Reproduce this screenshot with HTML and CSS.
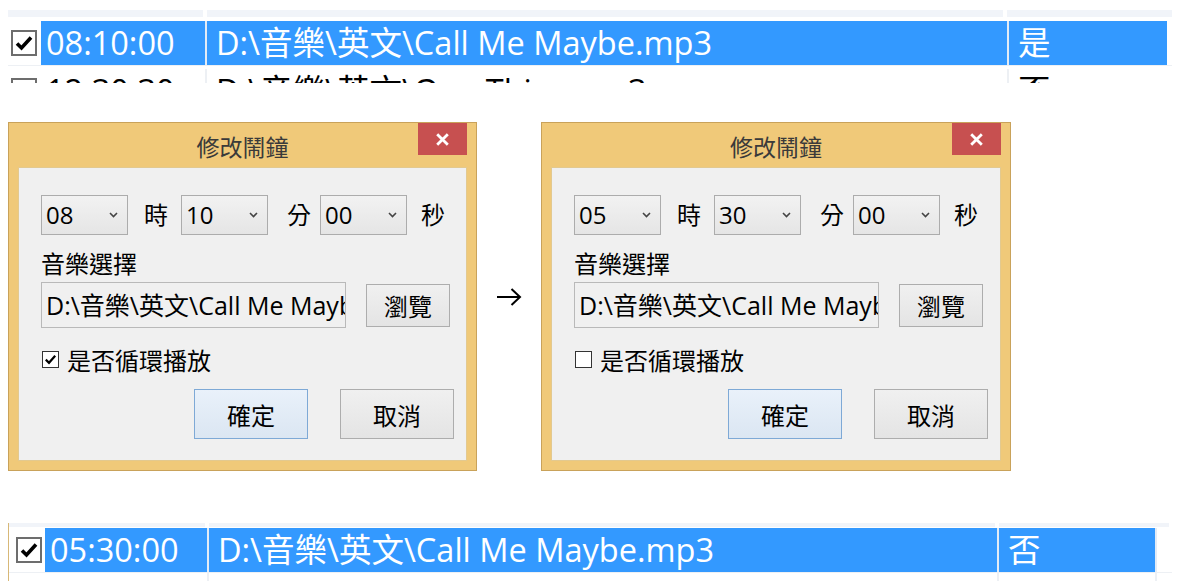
FILE: index.html
```html
<!DOCTYPE html>
<html lang="zh-Hant">
<head>
<meta charset="utf-8">
<title>修改鬧鐘</title>
<link rel="stylesheet" href="styles.css">
</head>
<body>
<section class="list list--top">
  <div class="list-head">
    <span class="hc hc-1"></span><span class="hc hc-2"></span><span class="hc hc-3"></span>
  </div>
  <div class="row row--sel">
    <span class="cell-chk"><svg class="lchk" viewBox="0 0 26 26" width="26" height="26"><rect x="1" y="1" width="24" height="24" fill="#fff" stroke="#6d6d6d" stroke-width="2"/><path d="M6 13.5 L10.5 18 L20 7.5" fill="none" stroke="#000" stroke-width="3.6"/></svg></span>
    <span class="cell c-time">08:10:00</span>
    <span class="cell c-path">D:\音樂\英文\Call Me Maybe.mp3</span>
    <span class="cell c-loop">是</span>
  </div>
  <div class="row row--next">
    <span class="cell-chk"><svg class="lchk" viewBox="0 0 26 26" width="26" height="26"><rect x="1" y="1" width="24" height="24" fill="#fff" stroke="#6d6d6d" stroke-width="2"/></svg></span>
    <span class="cell c-time">12:30:30</span>
    <span class="cell c-path">D:\音樂\英文\One Thing.mp3</span>
    <span class="cell c-loop">否</span>
  </div>
</section>

<section class="dialogs">
  <div class="dialog">
    <div class="titlebar">
      <span class="title">修改鬧鐘</span>
      <span class="close"><svg viewBox="0 0 13 13" width="13" height="13"><path d="M1.2 1.2 L11.8 11.8 M11.8 1.2 L1.2 11.8" stroke="#fff" stroke-width="2.8" fill="none"/></svg></span>
    </div>
    <div class="client">
      <div class="time-row">
        <div class="combo"><span>08</span><svg viewBox="0 0 9 6" width="9" height="6"><path d="M1 1 L4.5 4.5 L8 1" fill="none" stroke="#444" stroke-width="1.6"/></svg></div>
        <span class="unit unit-h">時</span>
        <div class="combo"><span>10</span><svg viewBox="0 0 9 6" width="9" height="6"><path d="M1 1 L4.5 4.5 L8 1" fill="none" stroke="#444" stroke-width="1.6"/></svg></div>
        <span class="unit unit-m">分</span>
        <div class="combo"><span>00</span><svg viewBox="0 0 9 6" width="9" height="6"><path d="M1 1 L4.5 4.5 L8 1" fill="none" stroke="#444" stroke-width="1.6"/></svg></div>
        <span class="unit unit-s">秒</span>
      </div>
      <div class="label">音樂選擇</div>
      <div class="file-row">
        <div class="field"><span class="field-text">D:\音樂\英文\Call Me Maybe.mp3</span></div>
        <span class="btn btn-browse">瀏覽</span>
      </div>
      <div class="chk-row">
        <svg class="dchk" viewBox="0 0 17 17" width="17" height="17"><rect x="0.5" y="0.5" width="16" height="16" fill="#fff" stroke="#333"/><path d="M3.8 8.6 L7 11.8 L13.2 4.8" fill="none" stroke="#000" stroke-width="2.2"/></svg>
        <span>是否循環播放</span>
      </div>
      <div class="btn-row">
        <span class="btn btn-default">確定</span>
        <span class="btn">取消</span>
      </div>
    </div>
  </div>

  <div class="arrow"><svg viewBox="0 0 26 20" width="26" height="20"><path d="M1 10 H24 M15.5 2 L24 10 L15.5 18" fill="none" stroke="#000" stroke-width="2"/></svg></div>

  <div class="dialog dialog--b">
    <div class="titlebar">
      <span class="title">修改鬧鐘</span>
      <span class="close"><svg viewBox="0 0 13 13" width="13" height="13"><path d="M1.2 1.2 L11.8 11.8 M11.8 1.2 L1.2 11.8" stroke="#fff" stroke-width="2.8" fill="none"/></svg></span>
    </div>
    <div class="client">
      <div class="time-row">
        <div class="combo"><span>05</span><svg viewBox="0 0 9 6" width="9" height="6"><path d="M1 1 L4.5 4.5 L8 1" fill="none" stroke="#444" stroke-width="1.6"/></svg></div>
        <span class="unit unit-h">時</span>
        <div class="combo"><span>30</span><svg viewBox="0 0 9 6" width="9" height="6"><path d="M1 1 L4.5 4.5 L8 1" fill="none" stroke="#444" stroke-width="1.6"/></svg></div>
        <span class="unit unit-m">分</span>
        <div class="combo"><span>00</span><svg viewBox="0 0 9 6" width="9" height="6"><path d="M1 1 L4.5 4.5 L8 1" fill="none" stroke="#444" stroke-width="1.6"/></svg></div>
        <span class="unit unit-s">秒</span>
      </div>
      <div class="label">音樂選擇</div>
      <div class="file-row">
        <div class="field"><span class="field-text">D:\音樂\英文\Call Me Maybe.mp3</span></div>
        <span class="btn btn-browse">瀏覽</span>
      </div>
      <div class="chk-row">
        <svg class="dchk" viewBox="0 0 17 17" width="17" height="17"><rect x="0.5" y="0.5" width="16" height="16" fill="#fff" stroke="#333"/></svg>
        <span>是否循環播放</span>
      </div>
      <div class="btn-row">
        <span class="btn btn-default">確定</span>
        <span class="btn">取消</span>
      </div>
    </div>
  </div>
</section>

<section class="list list--bottom">
  <div class="list-head">
    <span class="hc hc-1"></span><span class="hc hc-2"></span><span class="hc hc-3"></span>
  </div>
  <div class="row row--sel">
    <span class="cell-chk"><svg class="lchk" viewBox="0 0 26 26" width="26" height="26"><rect x="1" y="1" width="24" height="24" fill="#fff" stroke="#6d6d6d" stroke-width="2"/><path d="M6 13.5 L10.5 18 L20 7.5" fill="none" stroke="#000" stroke-width="3.6"/></svg></span>
    <span class="cell c-time">05:30:00</span>
    <span class="cell c-path">D:\音樂\英文\Call Me Maybe.mp3</span>
    <span class="cell c-loop">否</span>
    <span class="cell c-rest"></span>
  </div>
  <div class="row row--empty">
    <span class="cell-chk"></span>
    <span class="cell c-time"></span>
    <span class="cell c-path"></span>
    <span class="cell c-loop"></span>
    <span class="cell c-rest"></span>
  </div>
</section>
</body>
</html>
```

FILE: styles.css
```css
* { box-sizing: border-box; }

html, body {
  margin: 0;
  background: #fff;
}

body {
  width: 1187px;
  height: 581px;
  overflow: hidden;
  font-family: "Open Sans", "Noto Sans CJK TC", sans-serif;
  color: #000;
}

/* ---------- list views ---------- */
.list {
  margin-left: 8px;
  width: 1164px;
}

.list--top {
  padding-top: 10px;
  height: 83px;
  overflow: hidden;
}

.list-head {
  display: flex;
  gap: 4px;
  height: 7px;
  margin-bottom: 4px;
}

.hc { background: #f1f4f9; }
.list--top .hc-1 { width: 195px; }
.list--top .hc-2 { width: 796px; }
.list--top .hc-3 { width: 165px; }

.row {
  display: flex;
  height: 45px;
  border-bottom: 1px solid #edf0f4;
  font-size: 32.5px;
  line-height: 44px;
  white-space: nowrap;
}

.row--next { margin-top: 3px; }

.cell-chk {
  display: flex;
  align-items: center;
  justify-content: center;
  flex: none;
}

.cell {
  flex: none;
  overflow: hidden;
  padding-left: 9px;
  border-left: 2px solid #edf0f4;
}

.cell.c-time { padding-left: 5px; border-left: 0; }

.row--sel .cell { background: #3399ff; color: #fff; border-left-color: #e2ebf6; }
.row--sel .cell.c-rest { background: #fff; }

.list--top .cell-chk { width: 33px; justify-content: flex-start; padding-left: 3px; }
.list--top .c-time { width: 164px; }
.list--top .c-path { width: 802px; }
.list--top .c-loop { width: 160px; }

/* bottom list */
.list--bottom {
  margin-top: 52px;
  border-left: 1px solid #d8b877;
  height: 58px;
  overflow: hidden;
}

.list--bottom .list-head { height: 4px; margin-bottom: 1px; }
.list--bottom .hc-1 { width: 196px; }
.list--bottom .hc-2 { width: 786px; }
.list--bottom .hc-3 { width: 170px; }

.list--bottom .cell-chk { width: 36px; justify-content: flex-start; padding-left: 7px; }
.list--bottom .c-time { width: 162px; }
.list--bottom .c-path { width: 790px; }
.list--bottom .c-loop { width: 158px; }
.list--bottom .c-rest { width: 18px; }
.row--empty { border-bottom: 0; }

/* ---------- dialogs ---------- */
.dialogs {
  display: flex;
  align-items: center;
  padding-left: 8px;
  margin-top: 39px;
}

.dialog {
  width: 469px;
  height: 349px;
  flex: none;
  display: flex;
  flex-direction: column;
  background: #f0c979;
  border: 1px solid #c9a25a;
  padding: 0 9px 9px 9px;
}

.dialog--b { width: 470px; }

.titlebar {
  height: 44px;
  flex: none;
  display: grid;
  grid-template-columns: 49px 1fr 49px;
}

.title {
  grid-column: 2;
  text-align: center;
  font-size: 23px;
  line-height: 32px;
  padding-top: 8px;
  color: #3a3a3a;
}

.close {
  grid-column: 3;
  width: 49px;
  height: 32px;
  background: #c75050;
  display: flex;
  align-items: center;
  justify-content: center;
}

.client {
  flex: 1;
  background: #f0f0f0;
  border: 1px solid #e3c98f;
  padding: 27px 12px 0 22px;
  font-size: 24px;
}

.time-row {
  display: flex;
  align-items: center;
  height: 40px;
}

.combo {
  width: 87px;
  height: 40px;
  flex: none;
  display: flex;
  align-items: center;
  justify-content: space-between;
  padding: 0 9px 0 4px;
  border: 1px solid #acacac;
  background: linear-gradient(#f2f2f2, #e5e5e5);
  line-height: 1;
}

.unit { line-height: 1; flex: none; }
.unit-h { margin: 0 13px 0 16px; }
.unit-m { margin: 0 9px 0 19px; }
.unit-s { margin-left: 14px; }

.label {
  margin-top: 15px;
  line-height: 28px;
}

.file-row {
  display: flex;
  align-items: flex-start;
  margin-top: 4px;
}

.field {
  width: 305px;
  height: 46px;
  flex: none;
  border: 1px solid #b9b9b9;
  background: #f0f0f0;
  padding-left: 4px;
  line-height: 44px;
  font-size: 25px;
  white-space: nowrap;
  overflow: hidden;
}

.btn {
  display: flex;
  align-items: center;
  justify-content: center;
  flex: none;
  border: 1px solid #adadad;
  background: linear-gradient(#f0f0f0, #e4e4e4);
}

.btn-browse {
  width: 84px;
  height: 43px;
  margin: 2px 0 0 20px;
}

.chk-row {
  display: flex;
  align-items: center;
  gap: 8px;
  height: 32px;
  margin-top: 15px;
}

.dchk { flex: none; margin-left: 1px; }

.btn-row {
  display: flex;
  justify-content: flex-end;
  gap: 32px;
  margin-top: 14px;
}

.btn-row .btn {
  width: 114px;
  height: 50px;
}

.btn-default {
  border-color: #7ea9d6;
  background: linear-gradient(#e9f1fa, #dbe6f2);
}

.arrow {
  width: 64px;
  flex: none;
  display: flex;
  justify-content: center;
}
```
